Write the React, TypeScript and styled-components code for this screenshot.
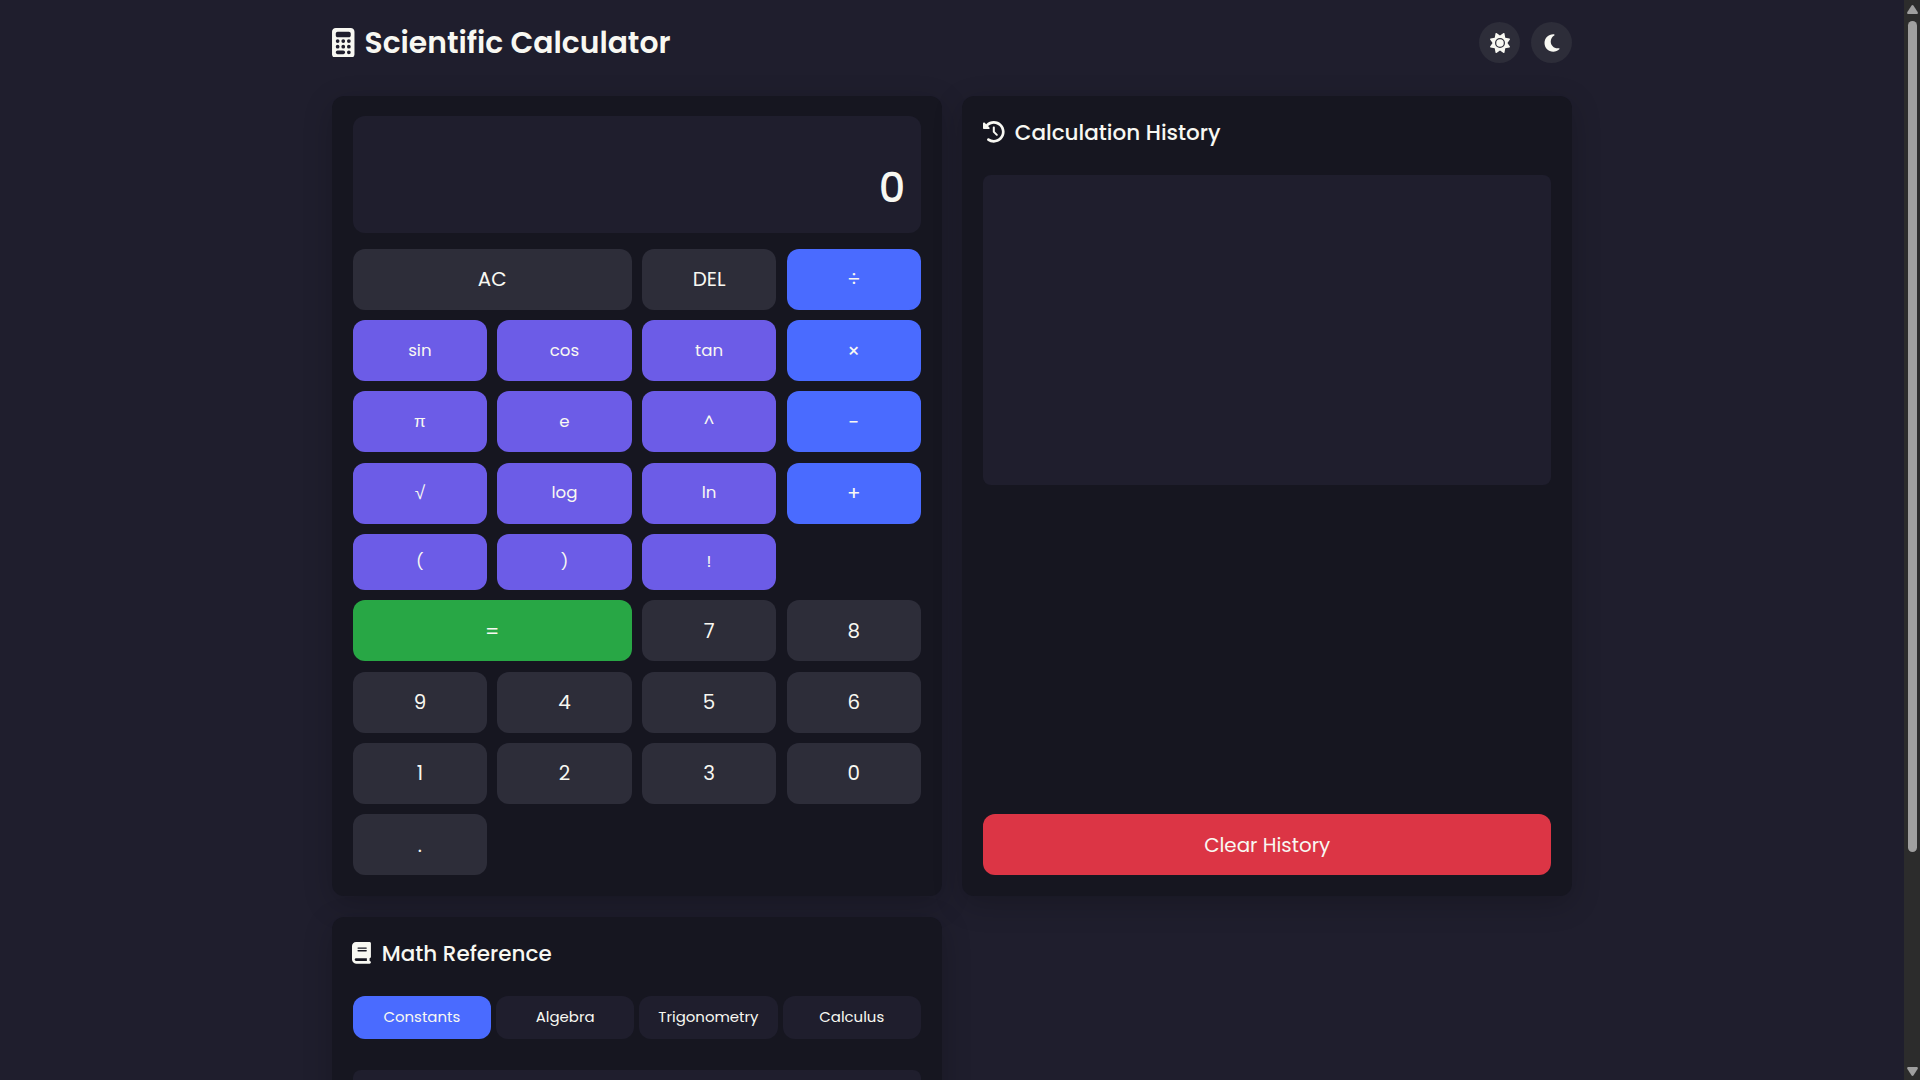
import React, { useState } from "react";
import styled, { createGlobalStyle, css } from "styled-components";
import { FaBook, FaCalculator, FaClockRotateLeft, FaMoon, FaSun } from "react-icons/fa6";

const color = {
  page: "#1f1e2d",
  panel: "#161620",
  key: "#2d2d39",
  blue: "#4a6bff",
  purple: "#6c5ce7",
  green: "#28a745",
  red: "#dc3545",
  text: "#f8f8f2",
};

const GlobalStyle = createGlobalStyle`
  * { box-sizing: border-box; margin: 0; padding: 0; }
  html, body { height: 100%; overflow: hidden; background: ${color.page}; }
  body, button {
    font-family: Poppins, Inter, "Liberation Sans", sans-serif;
    color: ${color.text};
  }
`;

const Viewport = styled.div`
  display: grid;
  grid-template-columns: minmax(0, 1fr) 16px;
  height: 1080px;
  overflow: hidden;
`;

const Page = styled.div`
  width: 1240px;
  height: 1080px;
  margin: 0 auto;
`;

const Header = styled.header`
  display: flex;
  align-items: center;
  justify-content: space-between;
  height: 95.6px;
  padding-bottom: 10.6px;
`;

const Title = styled.h1`
  display: flex;
  align-items: center;
  gap: 10px;
  font-size: 29.8px;
  font-weight: 600;
  line-height: 1;
  white-space: nowrap;
  svg { width: 22.5px; height: 29.95px; }
  span { padding-top: 1.2px; }
`;

const ThemeButtons = styled.div`
  display: flex;
  gap: 11px;
`;

const RoundButton = styled.button`
  display: grid;
  place-items: center;
  width: 41px;
  height: 41px;
  border: 0;
  border-radius: 50%;
  background: ${color.key};
  svg { width: 20px; height: 20px; }
`;

const Board = styled.main`
  display: grid;
  grid-template-columns: repeat(2, 1fr);
  grid-template-rows: 800.3px 320px;
  gap: 20.8px;
`;

const Panel = styled.section`
  display: flex;
  flex-direction: column;
  padding: 20.8px;
  border-radius: 12px;
  background: ${color.panel};
  box-shadow: 0 8px 30px rgba(0, 0, 0, 0.2);
  > * { flex-shrink: 0; }
`;

const Display = styled.div`
  display: flex;
  align-items: flex-end;
  justify-content: flex-end;
  height: 116.6px;
  margin-bottom: 15.85px;
  padding: 0 15.5px 20.2px;
  border-radius: 12px;
  background: ${color.page};
  font-size: 41.4px;
  font-weight: 500;
  line-height: 50px;
`;

const Keypad = styled.div`
  display: grid;
  grid-template-columns: repeat(4, 1fr);
  grid-template-rows: repeat(4, 60.9px) 56px repeat(4, 60.9px);
  gap: 10.4px;
`;

type Tone = "plain" | "fn" | "op" | "equals" | "danger";

const toneColor: Record<Tone, string> = {
  plain: color.key,
  fn: color.purple,
  op: color.blue,
  equals: color.green,
  danger: color.red,
};

const Key = styled.button<{ $tone: Tone; $wide?: boolean; $symbolSize?: number }>`
  display: flex;
  align-items: center;
  justify-content: center;
  min-height: 0;
  border: 0;
  border-radius: 12px;
  background: ${(p) => toneColor[p.$tone]};
  font-size: ${(p) => (p.$tone === "fn" ? "16.64px" : "19.85px")};
  ${(p) => p.$tone === "fn" && css`padding-bottom: 0.4px;`}
  ${(p) => p.$wide && css`grid-column: span 2;`}
  ${(p) =>
    p.$symbolSize &&
    css`
      font-family: "Liberation Sans", Arial, sans-serif;
      font-size: ${p.$symbolSize}px;
    `}
`;

const ClearButton = styled(Key)`
  height: 60.9px;
  margin-top: auto;
`;

const PanelTitle = styled.h2`
  display: flex;
  align-items: center;
  gap: 10px;
  height: 32.4px;
  margin-bottom: 26.2px;
  font-size: 21.5px;
  font-weight: 500;
  line-height: 1;
  white-space: nowrap;
`;

const HistoryIcon = styled(FaClockRotateLeft)`
  width: 21.63px;
  height: 21.63px;
  margin-bottom: 1px;
`;

const BookIcon = styled(FaBook)`
  width: 18.93px;
  height: 21.63px;
  margin: 0 0.5px 1px -0.5px;
`;

const HistoryList = styled.div`
  height: 310px;
  border-radius: 8px;
  background: ${color.page};
`;

const Tabs = styled.div`
  display: grid;
  grid-template-columns: repeat(4, 1fr);
  gap: 5.2px;
  margin-bottom: 31px;
`;

const Tab = styled.button<{ $active: boolean }>`
  height: 43px;
  padding-bottom: 2px;
  border: 0;
  border-radius: 12px;
  background: ${(p) => (p.$active ? color.blue : color.page)};
  font-size: 14.95px;
`;

const ReferenceBody = styled.div`
  height: 180px;
  border-radius: 8px;
  background: ${color.page};
`;

const Scrollbar = styled.aside`
  display: flex;
  flex-direction: column;
  align-items: center;
  padding: 5px 0 4px 1px;
  background: #2c2c2c;
  svg { display: block; }
`;

const Thumb = styled.div`
  width: 9px;
  height: 831px;
  margin: 7px 0 auto;
  border-radius: 5px;
  background: #9f9f9f;
`;

interface KeySpec {
  label: string;
  tone: Tone;
  wide?: boolean;
  symbolSize?: number;
}

const keys: KeySpec[] = [
  { label: "AC", tone: "plain", wide: true },
  { label: "DEL", tone: "plain" },
  { label: "÷", tone: "op" },
  { label: "sin", tone: "fn" },
  { label: "cos", tone: "fn" },
  { label: "tan", tone: "fn" },
  { label: "×", tone: "op" },
  { label: "π", tone: "fn", symbolSize: 17 },
  { label: "e", tone: "fn" },
  { label: "^", tone: "fn" },
  { label: "−", tone: "op" },
  { label: "√", tone: "fn", symbolSize: 19 },
  { label: "log", tone: "fn" },
  { label: "ln", tone: "fn" },
  { label: "+", tone: "op" },
  { label: "(", tone: "fn" },
  { label: ")", tone: "fn" },
  { label: "!", tone: "fn" },
  { label: "=", tone: "equals", wide: true },
  ...["7", "8", "9", "4", "5", "6", "1", "2", "3", "0", "."].map(
    (label): KeySpec => ({ label, tone: "plain" })
  ),
];

const topics = ["Constants", "Algebra", "Trigonometry", "Calculus"];

const Arrow = ({ down }: { down?: boolean }) => (
  <svg width="11" height="9" viewBox="0 0 11 9">
    <path
      d={
        down
          ? "M1 0H10Q11.4 0.6 10.6 2L6.6 8.2Q5.5 9.6 4.4 8.2L0.4 2Q-0.4 0.6 1 0Z"
          : "M1 9H10Q11.4 8.4 10.6 7L6.6 0.8Q5.5 -0.6 4.4 0.8L0.4 7Q-0.4 8.4 1 9Z"
      }
      fill="#9f9f9f"
    />
  </svg>
);

export default function App() {
  const [topic, setTopic] = useState("Constants");

  return (
    <>
      <GlobalStyle />
      <Viewport>
        <Page>
          <Header>
            <Title>
              <FaCalculator />
              <span>Scientific Calculator</span>
            </Title>
            <ThemeButtons>
              <RoundButton aria-label="Light theme"><FaSun /></RoundButton>
              <RoundButton aria-label="Dark theme"><FaMoon /></RoundButton>
            </ThemeButtons>
          </Header>
          <Board>
            <Panel>
              <Display>0</Display>
              <Keypad>
                {keys.map((k) => (
                  <Key key={k.label} $tone={k.tone} $wide={k.wide} $symbolSize={k.symbolSize}>
                    {k.label}
                  </Key>
                ))}
              </Keypad>
            </Panel>
            <Panel>
              <PanelTitle>
                <HistoryIcon />
                <span>Calculation History</span>
              </PanelTitle>
              <HistoryList />
              <ClearButton $tone="danger">Clear History</ClearButton>
            </Panel>
            <Panel>
              <PanelTitle>
                <BookIcon />
                <span>Math Reference</span>
              </PanelTitle>
              <Tabs>
                {topics.map((t) => (
                  <Tab key={t} $active={t === topic} onClick={() => setTopic(t)}>
                    {t}
                  </Tab>
                ))}
              </Tabs>
              <ReferenceBody />
            </Panel>
          </Board>
        </Page>
        <Scrollbar>
          <Arrow />
          <Thumb />
          <Arrow down />
        </Scrollbar>
      </Viewport>
    </>
  );
}
